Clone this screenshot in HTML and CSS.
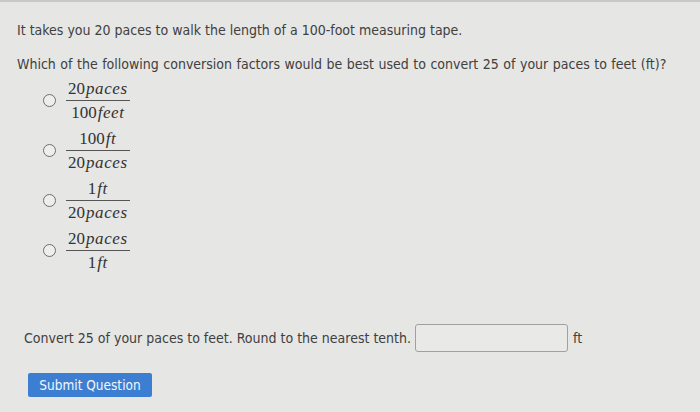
FILE: index.html
```html
<!DOCTYPE html>
<html>
<head>
<meta charset="utf-8">
<link rel="stylesheet" href="styles.css">
</head>
<body>
<div class="page">
  <p class="text line1">It takes you 20 paces to walk the length of a 100-foot measuring tape.</p>
  <p class="text line2">Which of the following conversion factors would be best used to convert 25 of your paces to feet (ft)?</p>
  <div class="options">
    <div class="option">
      <span class="radio"></span>
      <span class="frac"><span class="num">20<i>paces</i></span><span class="den">100<i>feet</i></span></span>
    </div>
    <div class="option">
      <span class="radio"></span>
      <span class="frac"><span class="num">100<i>ft</i></span><span class="den">20<i>paces</i></span></span>
    </div>
    <div class="option">
      <span class="radio"></span>
      <span class="frac"><span class="num">1<i>ft</i></span><span class="den">20<i>paces</i></span></span>
    </div>
    <div class="option">
      <span class="radio"></span>
      <span class="frac"><span class="num">20<i>paces</i></span><span class="den">1<i>ft</i></span></span>
    </div>
  </div>
  <div class="answer">
    <span class="text">Convert 25 of your paces to feet. Round to the nearest tenth.</span>
    <span class="box"></span>
    <span class="text unit">ft</span>
  </div>
  <button class="submit">Submit Question</button>
</div>
</body>
</html>
```
FILE: styles.css
```css
html, body {
  margin: 0;
  padding: 0;
  background: #e6e6e4;
}
body {
  width: 700px;
  height: 412px;
  overflow: hidden;
}
.page {
  border-top: 2px solid #c8c8c6;
  padding: 0 0 0 17px;
  color: #404040;
  font-family: "DejaVu Sans Condensed", "DejaVu Sans", sans-serif;
  font-stretch: condensed;
}
.text {
  font-size: 14px;
}
.line1 {
  margin: 18px 0 0 0;
  line-height: 20px;
}
.line2 {
  margin: 14px 0 0 0;
  line-height: 20px;
  word-spacing: 0.5px;
}
.options {
  display: flex;
  flex-direction: column;
  gap: 2px;
  margin: 2px 0 0 26px;
}
.option {
  display: flex;
  align-items: center;
  gap: 10px;
  height: 48px;
}
.radio {
  width: 11px;
  height: 11px;
  border: 1.3px solid #6e6e6e;
  border-radius: 50%;
  background: #eeeeec;
}
.frac {
  display: inline-flex;
  flex-direction: column;
  align-items: center;
  font-family: "Liberation Serif", "DejaVu Serif", serif;
  font-stretch: normal;
  font-size: 17px;
  color: #333;
}
.frac i {
  letter-spacing: 0.6px;
  margin-left: 1px;
}
.num {
  padding: 0 2px 2px 2px;
  line-height: 19px;
}
.den {
  border-top: 1px solid #555;
  padding: 2px 2px 0 2px;
  line-height: 19px;
  align-self: stretch;
  text-align: center;
}
.answer {
  display: flex;
  align-items: center;
  margin: 50px 0 0 7px;
}
.box {
  width: 151px;
  height: 26px;
  border: 1.5px solid #a0a0a0;
  border-radius: 3px;
  background: #e9e9e7;
  margin-left: 4px;
}
.unit {
  margin-left: 5px;
}
.submit {
  display: block;
  margin: 21px 0 0 11px;
  width: 124px;
  height: 24px;
  border: none;
  border-radius: 2px;
  background: #3c7fd2;
  color: #f2f6fb;
  font-family: "DejaVu Sans Condensed", "DejaVu Sans", sans-serif;
  font-stretch: condensed;
  font-size: 13.5px;
  padding: 0;
}
```
